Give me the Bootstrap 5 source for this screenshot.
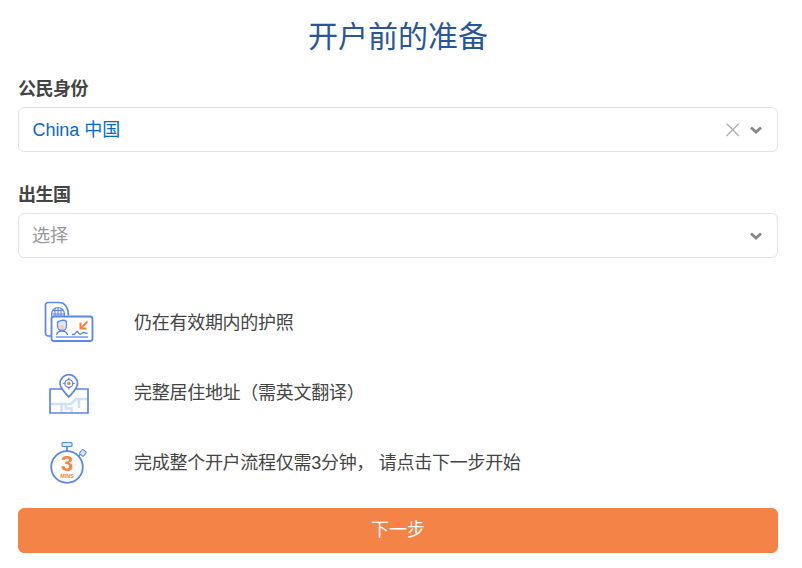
<!DOCTYPE html>
<html lang="zh"><head><meta charset="utf-8">
<link rel="stylesheet" href="https://cdn.jsdelivr.net/npm/bootstrap@5.3.0/dist/css/bootstrap.min.css">
<style>
body{font-family:"Liberation Sans","Noto Sans CJK SC",sans-serif;color:#444;background:#fff;overflow:hidden}
.page-wrap{padding:0 24px 0 18px;width:802px}
.page-title{font-size:30px;line-height:40px;color:#2a5596;text-align:center;margin:17px 0 0;font-weight:400}
.field-label{font-size:18px;line-height:26px;font-weight:700;color:#444;margin:0 0 5px;letter-spacing:-.5px}
.label-first{margin-top:19px}
.label-second{margin-top:30px}
.pick-box{height:45px;border:1px solid #e3e3e3;border-radius:6px;padding:0 14px;font-size:18px}
.pick-value{color:#0a68c4;letter-spacing:-.05px;margin-left:-.5px;padding-top:2px}
.pick-holder{color:#999;margin-left:-1px;padding-top:1px}
.info-list{margin-top:30px}
.info-row{height:70px}
.info-icon{width:116px;padding-left:26px}
.info-icon svg{display:block}
.info-text{font-size:18px;color:#444;letter-spacing:-.28px}
.next-btn{height:45px;background:#f38346;border-color:#f38346;color:#fff;font-size:18px;border-radius:6px;margin-top:10px}
.next-btn:hover{background:#f38346;border-color:#f38346;color:#fff}
</style></head><body>
<div class="page-wrap">
<h1 class="page-title">开户前的准备</h1>
<div class="field-label label-first">公民身份</div>
<div class="pick-box d-flex align-items-center">
<span class="pick-value flex-grow-1">China 中国</span>
<svg width="16" height="16" viewBox="0 0 16 16" class="me-2"><path d="M1.500 1.500L14 14M14 1.500L1.500 14" stroke="#aaa" stroke-width="1.200" fill="none"/></svg>
<svg width="14" height="10" viewBox="0 0 14 10"><path d="M2 2.500L7 7L12 2.500" stroke="#888" stroke-width="2.800" fill="none"/></svg>
</div>
<div class="field-label label-second">出生国</div>
<div class="pick-box d-flex align-items-center justify-content-between">
<span class="pick-holder">选择</span>
<svg width="14" height="10" viewBox="0 0 14 10"><path d="M2 2.500L7 7L12 2.500" stroke="#888" stroke-width="2.800" fill="none"/></svg>
</div>
<div class="info-list">
<div class="info-row d-flex align-items-center">
<div class="info-icon"><svg width="52" height="44" viewBox="0 0 52 44">
<path d="M9 35H4a2.500 2.500 0 0 1-2.500-2.500V4A2.500 2.500 0 0 1 4 1.500h11c6 0 9 5 9.500 13" fill="#fff" stroke="#5b86e5" stroke-width="1.700"/>
<circle cx="14" cy="13" r="6.500" fill="#eef3fd" stroke="#5b86e5" stroke-width="1.200"/><path d="M7.500 13h13M14 6.500v13M11 7v12M17 7v12M9 9.500h10" stroke="#5b86e5" stroke-width="1"/>
<rect x="7.500" y="15.500" width="41" height="24.500" rx="2.500" fill="#fff" stroke="#5b86e5" stroke-width="1.800"/>
<path d="M12 36h32" stroke="#5b86e5" stroke-width="1.300"/>
<path d="M13.500 21.500c2-2.500 7-3 9-1v4.500c0 2.500-2 4.500-4.500 4.500S13.500 27.500 13.500 25z" fill="#dce8fb" stroke="#5b86e5" stroke-width="1.300"/>
<circle cx="18" cy="26" r="2.300" fill="#fbc9a8"/>
<path d="M12.500 34c.5-2.500 3-4 5.500-4s5 1.500 5.500 4" fill="none" stroke="#5b86e5" stroke-width="1.300"/>
<path d="M28 33.500h2c1.500 0 1.500-3 3-3s1 2.500 3 2.500 2-1.500 3.500-1.500 2 1 4 1" fill="none" stroke="#5b86e5" stroke-width="1.300"/>
<path d="M43.500 20.500L36.500 27.500M36.500 21.500V27.500H42.500" fill="none" stroke="#f58345" stroke-width="2"/>
</svg></div>
<div class="info-text">仍在有效期内的护照</div>
</div>
<div class="info-row d-flex align-items-center">
<div class="info-icon"><svg width="52" height="44" viewBox="0 0 52 44">
<path d="M6.500 33h11v9M17 33h10l5-5h11M22 33v4.500h5.500v4M35 28v9" fill="none" stroke="#cfe0fa" stroke-width="2.600"/>
<path d="M6 18h38v24H6z" fill="none" stroke="#5b86e5" stroke-width="1.700"/>
<path d="M24.800 26c-4.500-5-8.800-9-8.800-13.500a8.800 8.800 0 0 1 17.600 0C33.600 17 29.300 21 24.800 26z" fill="#fff" stroke="#5b86e5" stroke-width="1.700"/>
<circle cx="24.800" cy="12.500" r="3.900" fill="#fff" stroke="#5b86e5" stroke-width="1.300"/><circle cx="24.800" cy="12.500" r="1.800" fill="#f58345"/>
<path d="M24.800 6.500v2.500M24.800 16v2.500M18.800 12.500h2.500M28.300 12.500h2.500" stroke="#5b86e5" stroke-width="1.200"/>
</svg></div>
<div class="info-text">完整居住地址（需英文翻译）</div>
</div>
<div class="info-row d-flex align-items-center">
<div class="info-icon"><svg width="52" height="44" viewBox="0 0 52 44">
<rect x="18" y="1.500" width="10" height="4" rx="1" fill="#dce8fb" stroke="#5b86e5" stroke-width="1.200"/>
<path d="M23 6v4" stroke="#5b86e5" stroke-width="1.800"/>
<path d="M35 15l3-3.500" stroke="#5b86e5" stroke-width="1.300"/>
<rect x="37" y="9" width="5" height="5.500" rx="1" fill="#dce8fb" stroke="#5b86e5" transform="rotate(40 39 11)"/>
<circle cx="23" cy="26" r="15.800" fill="#fff" stroke="#5b86e5" stroke-width="1.800"/>
<text x="23" y="29.500" text-anchor="middle" font-size="22" font-weight="700" fill="#f58345" font-family="Liberation Sans,sans-serif">3</text>
<text x="23" y="36.500" text-anchor="middle" font-size="5.500" font-weight="700" fill="#f58345" font-family="Liberation Sans,sans-serif">MINS</text>
</svg></div>
<div class="info-text">完成整个开户流程仅需3分钟， 请点击下一步开始</div>
</div>
</div>
<button type="button" class="btn next-btn w-100">下一步</button>
</div>
</body></html>
